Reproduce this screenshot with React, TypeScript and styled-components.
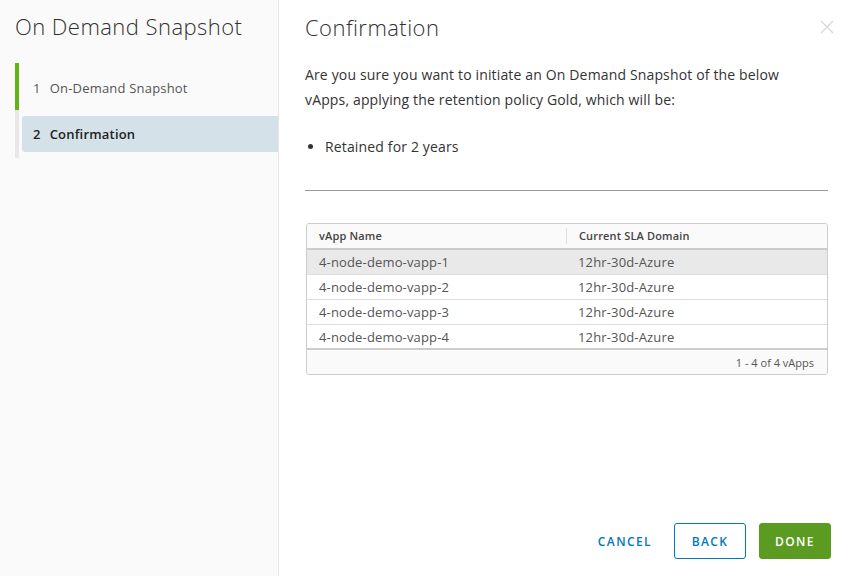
import React from "react";
import styled, { createGlobalStyle } from "styled-components";

const Global = createGlobalStyle`
  html, body { margin: 0; padding: 0; background: #fff; }
  body { font-family: "Open Sans", "Liberation Sans", sans-serif; color: #333; }
  * { box-sizing: border-box; }
`;

const Shell = styled.div`
  display: flex;
  width: 849px;
  height: 576px;
  overflow: hidden;
`;

const Sidebar = styled.aside`
  width: 279px;
  flex: none;
  background: #fafafa;
  border-right: 1px solid #e6e6e6;
  padding: 12px 0 0 15px;
`;

const SideTitle = styled.h2`
  margin: 0;
  font-size: 22px;
  font-weight: 300;
  color: #313131;
  line-height: 28px;
  letter-spacing: 0.45px;
`;

const Steps = styled.ol`
  list-style: none;
  margin: 23px 0 0;
  padding: 0;
  display: flex;
  flex-direction: column;
`;

const Step = styled.li<{ $state: "done" | "active" }>`
  display: flex;
  border-left: 4px solid ${(p) => (p.$state === "done" ? "#60b515" : "#e8e8e8")};
  padding: ${(p) => (p.$state === "done" ? "0" : "6px 0 6px 3px")};
`;

const StepLabel = styled.div<{ $active?: boolean }>`
  flex: 1;
  height: ${(p) => (p.$active ? "36px" : "47px")};
  display: flex;
  align-items: center;
  gap: 9px;
  padding-left: ${(p) => (p.$active ? "11px" : "14px")};
  padding-top: ${(p) => (p.$active ? "0" : "2px")};
  font-size: 13px;
  color: ${(p) => (p.$active ? "#222" : "#555")};
  font-weight: ${(p) => (p.$active ? 600 : 400)};
  background: ${(p) => (p.$active ? "#d5e1e9" : "transparent")};
  border-radius: ${(p) => (p.$active ? "3px 0 0 3px" : "0")};
  letter-spacing: 0.2px;
`;

const Main = styled.main`
  flex: 1;
  padding: 12px 18px 0 26px;
  display: flex;
  flex-direction: column;
`;

const HeaderRow = styled.div`
  display: flex;
  justify-content: space-between;
  align-items: flex-start;
`;

const Title = styled.h1`
  margin: 0;
  font-size: 22px;
  font-weight: 300;
  color: #313131;
  line-height: 30px;
  letter-spacing: 0.45px;
`;

const Close = styled.button`
  border: none;
  background: none;
  padding: 0;
  margin: 8px -3px 0 0;
  width: 14px;
  height: 14px;
  display: flex;
`;

const Para = styled.p`
  margin: 20px 0 0;
  font-size: 14px;
  line-height: 25px;
  color: #333;
  width: 500px;
  letter-spacing: 0.15px;
`;

const Bullets = styled.ul`
  margin: 23px 0 0;
  padding: 0 0 0 20px;
  font-size: 14px;
  line-height: 24px;
  color: #333;
  letter-spacing: 0.15px;
`;

const Rule = styled.hr`
  margin: 31px 3px 0 0;
  border: none;
  border-top: 1px solid #9a9a9a;
`;

const Table = styled.div`
  margin: 32px 3px 0 1px;
  border: 1px solid #ccc;
  border-radius: 3px;
  overflow: hidden;
  font-size: 13px;
`;

const Grid = styled.div<{ $head?: boolean; $sel?: boolean; $last?: boolean }>`
  display: grid;
  grid-template-columns: 259px 1fr;
  height: ${(p) => (p.$head ? "26px" : "25px")};
  align-items: center;
  background: ${(p) => (p.$head ? "#fafafa" : p.$sel ? "#e9e9e9" : "#fff")};
  border-bottom: ${(p) => (p.$head || p.$last ? "2px solid #ccc" : "1px solid #ddd")};
`;

const Cell = styled.div<{ $head?: boolean; $sep?: boolean }>`
  padding-left: 12px;
  font-size: ${(p) => (p.$head ? "11px" : "13px")};
  font-weight: ${(p) => (p.$head ? 600 : 400)};
  color: ${(p) => (p.$head ? "#444" : "#555")};
  border-left: ${(p) => (p.$sep ? "1px solid #ddd" : "none")};
  height: ${(p) => (p.$head ? "16px" : "auto")};
  line-height: ${(p) => (p.$head ? "16px" : "normal")};
  letter-spacing: 0.15px;
`;

const Footer = styled.div`
  height: 24px;
  background: #fafafa;
  display: flex;
  align-items: center;
  justify-content: flex-end;
  padding-right: 13px;
  font-size: 11px;
  color: #555;
`;

const Actions = styled.div`
  margin-top: auto;
  margin-right: 0;
  margin-bottom: 17px;
  display: flex;
  justify-content: flex-end;
  align-items: center;
  gap: 13px;
`;

const Btn = styled.button<{ $kind: "flat" | "outline" | "solid" }>`
  height: 36px;
  min-width: 72px;
  padding: 0 ${(p) => (p.$kind === "flat" ? "8px" : "12px")};
  font-family: inherit;
  font-size: 12px;
  font-weight: 600;
  letter-spacing: 1.4px;
  text-transform: uppercase;
  border-radius: 3px;
  border: 1px solid ${(p) => (p.$kind === "flat" ? "transparent" : p.$kind === "outline" ? "#0079b8" : "#5c9b22")};
  background: ${(p) => (p.$kind === "solid" ? "#5c9b22" : "#fff")};
  color: ${(p) => (p.$kind === "solid" ? "#fff" : "#0079b8")};
`;

const rows = [1, 2, 3, 4].map((n) => ({ name: `4-node-demo-vapp-${n}`, sla: "12hr-30d-Azure" }));

export default function App() {
  return (
    <Shell>
      <Global />
      <Sidebar>
        <SideTitle>On Demand Snapshot</SideTitle>
        <Steps>
          <Step $state="done">
            <StepLabel>
              <span>1</span>
              <span>On-Demand Snapshot</span>
            </StepLabel>
          </Step>
          <Step $state="active">
            <StepLabel $active>
              <span>2</span>
              <span>Confirmation</span>
            </StepLabel>
          </Step>
        </Steps>
      </Sidebar>
      <Main>
        <HeaderRow>
          <Title>Confirmation</Title>
          <Close aria-label="Close">
            <svg width="14" height="14" viewBox="0 0 14 14">
              <path d="M1 1L13 13M13 1L1 13" stroke="#d8d8d8" strokeWidth="1.3" fill="none" />
            </svg>
          </Close>
        </HeaderRow>
        <Para>
          Are you sure you want to initiate an On Demand Snapshot of the below vApps, applying the retention policy Gold, which will be:
        </Para>
        <Bullets>
          <li>Retained for 2 years</li>
        </Bullets>
        <Rule />
        <Table>
          <Grid $head>
            <Cell $head>vApp Name</Cell>
            <Cell $head $sep>Current SLA Domain</Cell>
          </Grid>
          {rows.map((r, i) => (
            <Grid key={r.name} $sel={i === 0} $last={i === rows.length - 1}>
              <Cell>{r.name}</Cell>
              <Cell>{r.sla}</Cell>
            </Grid>
          ))}
          <Footer>1 - 4 of 4 vApps</Footer>
        </Table>
        <Actions>
          <Btn $kind="flat">Cancel</Btn>
          <Btn $kind="outline">Back</Btn>
          <Btn $kind="solid">Done</Btn>
        </Actions>
      </Main>
    </Shell>
  );
}
